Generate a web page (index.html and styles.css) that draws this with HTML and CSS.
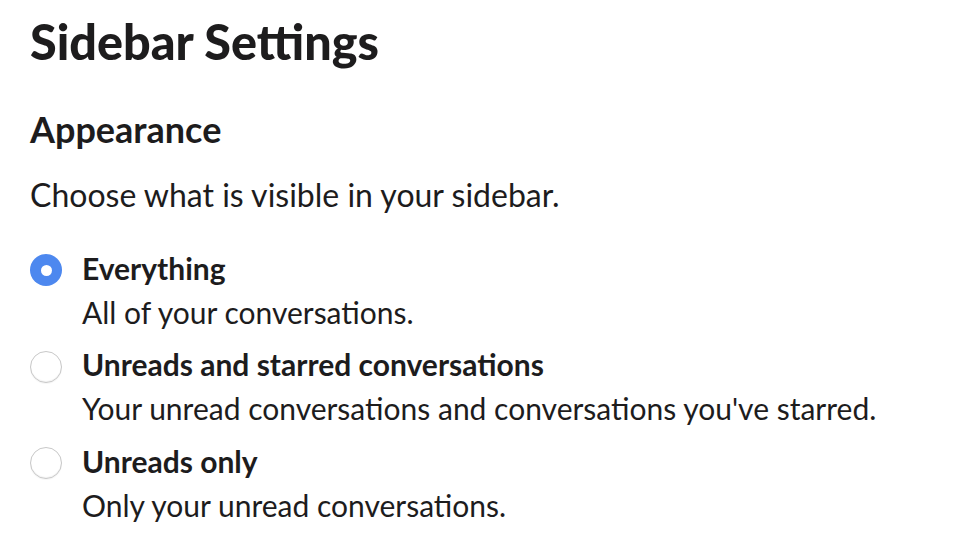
FILE: index.html
```html
<!DOCTYPE html>
<html lang="en">
<head>
<meta charset="utf-8">
<title>Sidebar Settings</title>
<link rel="stylesheet" href="styles.css">
</head>
<body>
<main class="page">
  <h1 class="title">Sidebar Settings</h1>
  <h2 class="section-title">Appearance</h2>
  <p class="intro">Choose what is visible in your sidebar.</p>
  <div class="options" role="radiogroup">
    <label class="option">
      <span class="radio radio--checked"><span class="radio-dot"></span></span>
      <span class="option-text">
        <span class="option-label">Everything</span>
        <span class="option-desc">All of your conversations.</span>
      </span>
    </label>
    <label class="option">
      <span class="radio"></span>
      <span class="option-text">
        <span class="option-label">Unreads and starred conversations</span>
        <span class="option-desc">Your unread conversations and conversations you've starred.</span>
      </span>
    </label>
    <label class="option">
      <span class="radio"></span>
      <span class="option-text">
        <span class="option-label">Unreads only</span>
        <span class="option-desc">Only your unread conversations.</span>
      </span>
    </label>
  </div>
</main>
</body>
</html>
```
FILE: styles.css
```css
html, body {
  margin: 0;
  padding: 0;
  background: #ffffff;
}
body {
  font-family: "Lato", "Noto Sans", sans-serif;
  color: #1d1c1d;
}
.page {
  padding: 11px 30px 0 30px;
}
.title {
  margin: 0;
  font-size: 48.5px;
  line-height: 60px;
  font-weight: 900;
}
.section-title {
  margin: 36px 0 0 0;
  font-size: 36px;
  line-height: 44px;
  font-weight: 700;
}
.intro {
  margin: 21.5px 0 0 0;
  font-size: 32px;
  line-height: 44px;
  font-weight: 400;
}
.options {
  margin-top: 29px;
  display: flex;
  flex-direction: column;
  gap: 8.5px;
}
.option {
  display: flex;
  align-items: flex-start;
  gap: 20px;
  font-size: 30px;
  line-height: 44px;
}
.radio {
  flex: none;
  box-sizing: border-box;
  width: 32px;
  height: 32px;
  margin-top: 8.5px;
  border-radius: 50%;
  border: 1.5px solid #c8c8c8;
  background: #ffffff;
  box-shadow: inset 0 -1px 1px rgba(0,0,0,0.05), 0 1px 1px rgba(0,0,0,0.04);
  display: flex;
  align-items: center;
  justify-content: center;
}
.radio--checked {
  border: none;
  background: #4d88ef;
  box-shadow: none;
}
.radio-dot {
  width: 11px;
  height: 11px;
  border-radius: 50%;
  background: #ffffff;
}
.option-text {
  display: flex;
  flex-direction: column;
}
.option-label {
  font-weight: 700;
}
.option-desc {
  font-weight: 400;
}
```
